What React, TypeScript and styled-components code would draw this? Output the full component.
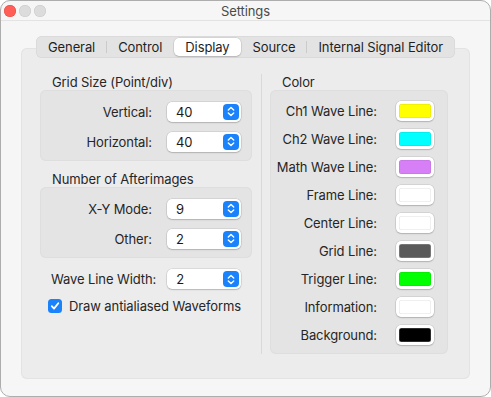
import React from 'react';
import styled, { createGlobalStyle } from 'styled-components';

const GlobalStyle = createGlobalStyle`
  html, body {
    margin: 0;
    padding: 0;
    background: #ffffff;
  }
  body {
    font-family: Inter, 'Noto Sans', 'Liberation Sans', sans-serif;
    font-size: 13px;
    letter-spacing: -0.1px;
    color: #262626;
    -webkit-font-smoothing: antialiased;
  }
`;

const tabs = ['General', 'Control', 'Display', 'Source', 'Internal Signal Editor'];
const activeTab = 'Display';

const colorRows = [
  { label: 'Ch1 Wave Line:', color: '#ffff00' },
  { label: 'Ch2 Wave Line:', color: '#00ffff' },
  { label: 'Math Wave Line:', color: '#d77ff7' },
  { label: 'Frame Line:', color: '#ffffff' },
  { label: 'Center Line:', color: '#ffffff' },
  { label: 'Grid Line:', color: '#5a5a5a' },
  { label: 'Trigger Line:', color: '#00ff00' },
  { label: 'Information:', color: '#ffffff' },
  { label: 'Background:', color: '#000000' },
];

const Settings = () => {
  return (
    <Window>
      <TitleBar>
        <Lights>
          <Light $color="#ff5f57" $border="#e14942" />
          <Light $color="#dcdcdc" $border="#c9c9c9" />
          <Light $color="#dcdcdc" $border="#c9c9c9" />
        </Lights>
        <Title>Settings</Title>
        <span />
      </TitleBar>
      <Body>
        <TabBar>
          {tabs.map((tab, i) => {
            const active = tab === activeTab;
            const next = tabs[i + 1];
            const showSep = next && !active && next !== activeTab;
            return (
              <React.Fragment key={tab}>
                <Tab $active={active}>{tab}</Tab>
                {next && <TabSep $visible={!!showSep} />}
              </React.Fragment>
            );
          })}
        </TabBar>
        <Panel>
          <Column>
            <SectionTitle>Grid Size (Point/div)</SectionTitle>
            <GroupBox>
              <FormRow>
                <Label>Vertical:</Label>
                <Popup value="40" />
              </FormRow>
              <FormRow>
                <Label>Horizontal:</Label>
                <Popup value="40" />
              </FormRow>
            </GroupBox>
            <SectionTitle $gap>Number of Afterimages</SectionTitle>
            <GroupBox>
              <FormRow>
                <Label>X-Y Mode:</Label>
                <Popup value="9" />
              </FormRow>
              <FormRow>
                <Label>Other:</Label>
                <Popup value="2" />
              </FormRow>
            </GroupBox>
            <LooseRow>
              <span>Wave Line Width:</span>
              <Popup value="2" />
            </LooseRow>
            <CheckRow>
              <CheckBox>
                <svg width="10" height="10" viewBox="0 0 10 10">
                  <path
                    d="M1.8 5.2 L4 7.6 L8.3 2.2"
                    fill="none"
                    stroke="#fff"
                    strokeWidth="1.8"
                    strokeLinecap="round"
                    strokeLinejoin="round"
                  />
                </svg>
              </CheckBox>
              <span>Draw antialiased Waveforms</span>
            </CheckRow>
          </Column>
          <Divider />
          <ColorColumn>
            <SectionTitle>Color</SectionTitle>
            <ColorBox>
              {colorRows.map(({ label, color }) => (
                <ColorRow key={label}>
                  <Label>{label}</Label>
                  <Well>
                    <Swatch style={{ background: color }} $dark={color === '#000000' || color === '#5a5a5a'} />
                  </Well>
                </ColorRow>
              ))}
            </ColorBox>
          </ColorColumn>
        </Panel>
      </Body>
    </Window>
  );
};

const Popup = ({ value }: { value: string }) => (
  <PopupButton>
    <span>{value}</span>
    <Stepper>
      <svg width="8" height="11" viewBox="0 0 8 11">
        <path
          d="M1.3 4 L4 1.4 L6.7 4 M1.3 7 L4 9.6 L6.7 7"
          fill="none"
          stroke="#fff"
          strokeWidth="1.4"
          strokeLinecap="round"
          strokeLinejoin="round"
        />
      </svg>
    </Stepper>
  </PopupButton>
);

export default function App() {
  return (
    <>
      <GlobalStyle />
      <Settings />
    </>
  );
}

const Window = styled.div`
  width: 491px;
  height: 397px;
  box-sizing: border-box;
  background: #f6f6f6;
  border: 1px solid #adadad;
  border-radius: 10px;
  overflow: hidden;
  display: flex;
  flex-direction: column;
`;

const TitleBar = styled.div`
  height: 19px;
  flex: none;
  display: grid;
  grid-template-columns: 1fr auto 1fr;
  align-items: center;
  border-bottom: 1px solid #e3e3e3;
`;

const Lights = styled.div`
  display: flex;
  gap: 3px;
  padding-left: 3px;
  padding-top: 1px;
`;

const Light = styled.span<{ $color: string; $border: string }>`
  width: 12px;
  height: 12px;
  border-radius: 50%;
  background: ${(p) => p.$color};
  box-shadow: inset 0 0 0 0.5px ${(p) => p.$border};
`;

const Title = styled.div`
  font-size: 13px;
  color: #4a4a4a;
  padding-top: 1px;
`;

const Body = styled.div`
  flex: 1;
  display: flex;
  flex-direction: column;
  align-items: center;
  padding: 15px 20px 18px 20px;
`;

const TabBar = styled.div`
  position: relative;
  z-index: 1;
  display: flex;
  align-items: center;
  height: 22px;
  box-sizing: border-box;
  padding: 0 1px;
  margin-bottom: -10px;
  background: #e3e3e3;
  border-radius: 6px;
  box-shadow: inset 0 0 0 0.5px #d2d2d2;
`;

const Tab = styled.div<{ $active: boolean }>`
  height: 18px;
  line-height: 18px;
  padding: 0 11px;
  border-radius: 5px;
  white-space: nowrap;
  color: #1f1f1f;
  background: ${(p) => (p.$active ? '#ffffff' : 'transparent')};
  box-shadow: ${(p) => (p.$active ? '0 0 0 0.5px rgba(0,0,0,0.12), 0 1px 1.5px rgba(0,0,0,0.15)' : 'none')};
`;

const TabSep = styled.span<{ $visible: boolean }>`
  width: 1px;
  height: 12px;
  background: ${(p) => (p.$visible ? '#cbcbcb' : 'transparent')};
`;

const Panel = styled.div`
  align-self: stretch;
  flex: 1;
  display: flex;
  padding: 26px 20px 25px 19px;
  background: #ececec;
  border-radius: 6px;
  box-shadow: inset 0 0 0 1px #e3e3e3;
`;

const Column = styled.div`
  width: 212px;
  display: flex;
  flex-direction: column;
`;

const ColorColumn = styled(Column)`
  width: 178px;
`;

const Divider = styled.div`
  width: 1px;
  background: #d9d9d9;
  margin: 0 8px 0 9px;
`;

const SectionTitle = styled.div<{ $gap?: boolean }>`
  height: 16px;
  line-height: 16px;
  padding-left: 12px;
  margin-top: ${(p) => (p.$gap ? '10px' : '0')};
`;

const GroupBox = styled.div`
  background: #e4e4e4;
  border-radius: 6px;
  box-shadow: inset 0 0 0 1px #dedede;
  padding: 11px 11px 9px 0;
  display: flex;
  flex-direction: column;
  gap: 9px;
`;

const FormRow = styled.div`
  display: grid;
  grid-template-columns: 1fr 74px;
  column-gap: 15px;
  align-items: center;
  height: 21px;
`;

const Label = styled.span`
  text-align: right;
  white-space: nowrap;
`;

const PopupButton = styled.div`
  width: 74px;
  height: 20px;
  box-sizing: border-box;
  display: flex;
  align-items: center;
  justify-content: space-between;
  padding: 0 2px 0 9px;
  background: #ffffff;
  border-radius: 5px;
  box-shadow: 0 0 0 0.5px rgba(0, 0, 0, 0.14), 0 1px 1.5px rgba(0, 0, 0, 0.16);
  color: #1a1a1a;
`;

const Stepper = styled.span`
  width: 16px;
  height: 16px;
  border-radius: 4px;
  background: #1a82fb;
  display: flex;
  align-items: center;
  justify-content: center;
`;

const LooseRow = styled.div`
  display: flex;
  align-items: center;
  gap: 11px;
  padding-left: 11px;
  margin-top: 11px;
  height: 20px;
`;

const CheckRow = styled.div`
  display: flex;
  align-items: center;
  gap: 7px;
  padding-left: 8px;
  margin-top: 10px;
  height: 14px;
`;

const CheckBox = styled.span`
  width: 14px;
  height: 14px;
  border-radius: 3.5px;
  background: #1a82fb;
  display: flex;
  align-items: center;
  justify-content: center;
`;

const ColorBox = styled.div`
  flex: 1;
  background: #e4e4e4;
  border-radius: 6px;
  box-shadow: inset 0 0 0 1px #dedede;
  padding: 11px 14px 9px 0;
  display: flex;
  flex-direction: column;
  gap: 8px;
`;

const ColorRow = styled.div`
  display: grid;
  grid-template-columns: 1fr 38px;
  column-gap: 19px;
  align-items: center;
  height: 20px;
`;

const Well = styled.div`
  width: 38px;
  height: 20px;
  box-sizing: border-box;
  padding: 3px;
  background: #ffffff;
  border-radius: 5px;
  box-shadow: 0 0 0 0.5px rgba(0, 0, 0, 0.14), 0 1px 1.5px rgba(0, 0, 0, 0.16);
`;

const Swatch = styled.div<{ $dark: boolean }>`
  width: 100%;
  height: 100%;
  border-radius: 2.5px;
  box-shadow: inset 0 0 0 0.5px ${(p) => (p.$dark ? 'rgba(255,255,255,0.35)' : 'rgba(0,0,0,0.12)')};
`;
